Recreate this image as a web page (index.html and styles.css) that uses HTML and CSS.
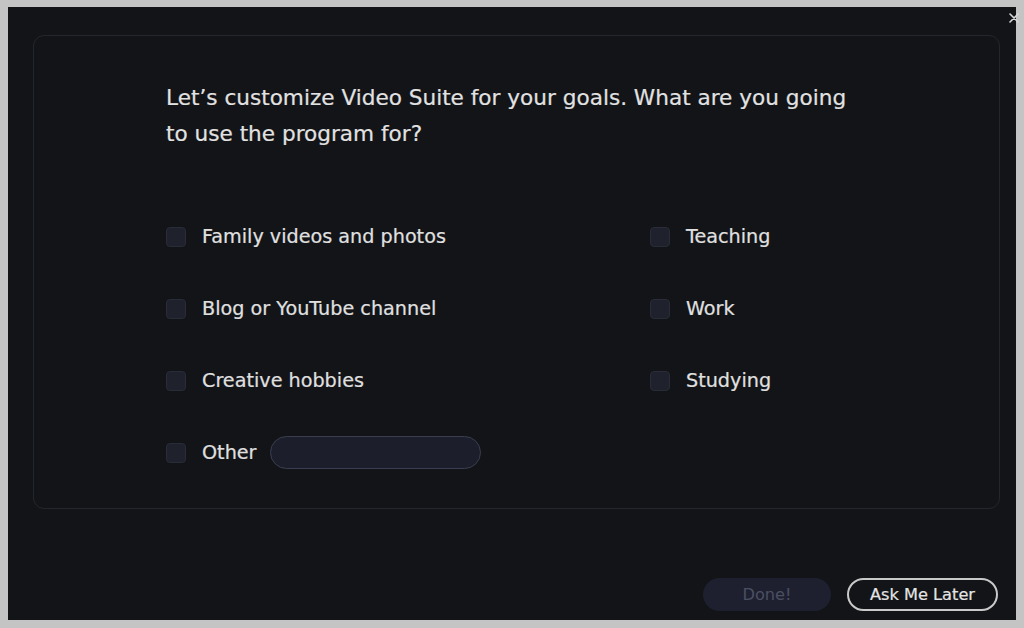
FILE: index.html
```html
<!DOCTYPE html>
<html>
<head>
<meta charset="utf-8">
<link rel="stylesheet" href="styles.css">
</head>
<body>
<div class="window">
  <svg class="close" width="10" height="10" viewBox="0 0 10 10"><path d="M1 1L9 9M9 1L1 9" stroke="#d8d8d8" stroke-width="1.6" stroke-linecap="round"/></svg>
  <div class="card">
    <p class="question">Let’s customize Video Suite for your goals. What are you going to use the program for?</p>
    <div class="options">
      <label class="option"><span class="box"></span><span>Family videos and photos</span></label>
      <label class="option"><span class="box"></span><span>Teaching</span></label>
      <label class="option"><span class="box"></span><span>Blog or YouTube channel</span></label>
      <label class="option"><span class="box"></span><span>Work</span></label>
      <label class="option"><span class="box"></span><span>Creative hobbies</span></label>
      <label class="option"><span class="box"></span><span>Studying</span></label>
      <label class="option"><span class="box"></span><span>Other</span><span class="field"></span></label>
    </div>
  </div>
  <div class="actions">
    <button class="btn done">Done!</button>
    <button class="btn later">Ask Me Later</button>
  </div>
</div>
</body>
</html>
```
FILE: styles.css
```css
html, body {
  margin: 0;
  padding: 0;
  background: #c4c4c4;
  width: 1024px;
  height: 628px;
  overflow: hidden;
}
body {
  padding: 7px 0 0 8px;
  box-sizing: border-box;
  font-family: "DejaVu Sans", Verdana, sans-serif;
}
.window {
  position: relative;
  width: 1008px;
  height: 613px;
  background: #131418;
  box-sizing: border-box;
  padding: 28px 18px 9px 25px;
  display: flex;
  flex-direction: column;
}
.close {
  position: absolute;
  top: 6px;
  right: -3px;
}
.card {
  height: 474px;
  box-sizing: border-box;
  border: 1px solid #23262d;
  border-radius: 11px;
  padding: 44px 20px 0 132px;
  margin-right: -2px;
}
.question {
  margin: 0;
  width: 700px;
  font-size: 21.6px;
  line-height: 36px;
  color: #e2e2e2;
  -webkit-text-stroke: 0.2px #e2e2e2;
}
.options {
  margin-top: 75px;
  display: grid;
  grid-template-columns: 484px 300px;
  grid-auto-rows: 72px;
}
.option {
  display: flex;
  align-items: flex-start;
  height: 36px;
  font-size: 19.2px;
  color: #e0e0e0;
  line-height: 20px;
  -webkit-text-stroke: 0.2px #e0e0e0;
}
.box {
  width: 20px;
  height: 20px;
  box-sizing: border-box;
  border-radius: 4px;
  background: #1f212c;
  border: 1px solid #292c38;
  margin-right: 16px;
  flex: none;
}
.field {
  width: 211px;
  height: 33px;
  box-sizing: border-box;
  margin-left: 14px;
  margin-top: -7px;
  border-radius: 17px;
  background: #1c1e2b;
  border: 1px solid #3b3e50;
}
.actions {
  margin-top: auto;
  display: flex;
  justify-content: flex-end;
  gap: 16px;
}
.btn {
  height: 33px;
  border-radius: 17px;
  font-family: "DejaVu Sans", Verdana, sans-serif;
  font-size: 16.2px;
  padding: 0;
  box-sizing: border-box;
}
.done {
  width: 128px;
  background: #1e2030;
  border: none;
  color: #4b4f62;
}
.later {
  width: 151px;
  background: #131418;
  border: 2px solid #c9c9c9;
  color: #e4e4e4;
  -webkit-text-stroke: 0.2px #e4e4e4;
}
```
